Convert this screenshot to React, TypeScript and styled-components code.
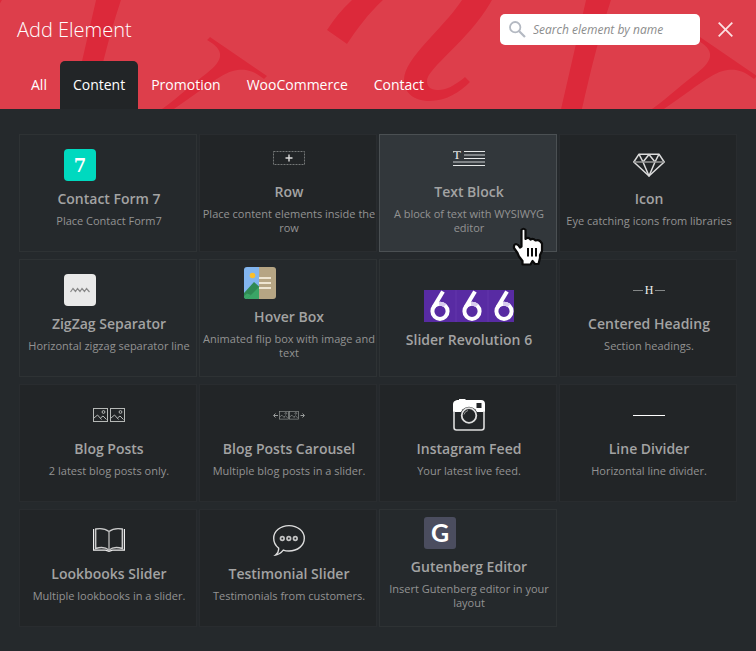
import React, { useState } from "react";
import styled, { createGlobalStyle } from "styled-components";

const GlobalStyle = createGlobalStyle`
  * { box-sizing: border-box; }
  body {
    margin: 0;
    background: #2a202d;
    font-family: "Open Sans", "Noto Sans", sans-serif;
  }
  button, input { font-family: inherit; }
`;

const Dialog = styled.main`
  min-height: 100vh;
  display: flex;
  flex-direction: column;
  background: #25292c;
  border-bottom: 1px solid #2a202d;
`;

const Header = styled.header`
  position: relative;
  isolation: isolate;
  background: #dd3e4b;
`;

const Backdrop = styled.svg`
  position: absolute;
  inset: 0;
  width: 100%;
  height: 100%;
  z-index: -1;
`;

const TopBar = styled.div`
  display: flex;
  align-items: center;
  height: 59px;
  padding: 0 5px 0 17px;
`;

const Title = styled.h1`
  flex: 1;
  margin: 0;
  font-size: 20px;
  line-height: 28px;
  font-weight: 300;
  color: #fff;
`;

const SearchBox = styled.label`
  display: flex;
  align-items: center;
  gap: 7px;
  width: 200px;
  height: 31px;
  padding: 0 9px;
  border-radius: 5px;
  background: #fff;
`;

const SearchInput = styled.input`
  flex: 1;
  min-width: 0;
  padding: 0;
  border: 0;
  outline: 0;
  background: transparent;
  font-size: 12px;
  line-height: 20px;
  font-style: italic;
  color: #555;
  &::placeholder { color: #8c8c8c; opacity: 1; }
`;

const CloseButton = styled.button`
  display: flex;
  align-items: center;
  justify-content: center;
  width: 51px;
  height: 31px;
  padding: 0;
  border: 0;
  background: transparent;
  cursor: pointer;
`;

const Tabs = styled.nav`
  display: flex;
  padding: 2px 18px 0;
`;

const Tab = styled.button<{ $active: boolean }>`
  height: 48px;
  padding: 0 13px;
  border: 0;
  border-radius: 5px 5px 0 0;
  background: ${(p) => (p.$active ? "#222527" : "transparent")};
  font-size: 14px;
  line-height: 20px;
  font-weight: 500;
  color: #fff;
  cursor: pointer;
`;

const Grid = styled.ul`
  display: grid;
  grid-template-columns: repeat(4, 1fr);
  gap: 7px 2px;
  margin: 0;
  padding: 25px 19px 24px;
  list-style: none;
`;

const Cell = styled.li`
  position: relative;
  display: flex;
  min-width: 0;
`;

type Tone = "plain" | "dark" | "hover";
const toneFill = { plain: "#25292c", dark: "#222527", hover: "#32373b" };
const toneLine = { plain: "#2e3234", dark: "#292c2f", hover: "#4b5053" };

const Card = styled.button<{ $tone: Tone }>`
  display: flex;
  flex-direction: column;
  align-items: center;
  justify-content: center;
  width: 100%;
  min-height: 118px;
  padding: 0 0 0 2px;
  border: 1px solid ${(p) => toneLine[p.$tone]};
  background: ${(p) => toneFill[p.$tone]};
  text-align: center;
  cursor: pointer;
`;

const IconSlot = styled.span<{ $wide?: boolean }>`
  display: flex;
  width: ${(p) => (p.$wide ? "90px" : "32px")};
  height: 32px;
  margin-bottom: 11px;
`;

const CardTitle = styled.span`
  font-size: 14px;
  line-height: 14px;
  font-weight: 600;
  color: #a3a3a3;
`;

const CardText = styled.span`
  margin: 8px 0 9px;
  font-size: 11px;
  line-height: 14px;
  color: #939393;
`;

const Pointer = styled.svg`
  position: absolute;
  right: 12px;
  top: 93px;
  z-index: 1;
  pointer-events: none;
`;

const Svg = ({ children, w = 32 }: { children: React.ReactNode; w?: number }) => (
  <svg width={w} height="32" viewBox={`0 0 ${w} 32`} fill="none" aria-hidden="true">
    {children}
  </svg>
);

const Contact7Icon = () => (
  <Svg>
    <rect width="32" height="32" rx="4" fill="#00d9bf" />
    <text x="16" y="23" textAnchor="middle" fontFamily="DejaVu Serif, serif" fontWeight="700" fontSize="18" fill="#fff">7</text>
  </Svg>
);

const RowIcon = () => (
  <Svg>
    <rect x="0.5" y="9.5" width="31" height="13" stroke="#757878" strokeDasharray="2 1" />
    <path d="M12.5 16H19.5M16 12.5V19.5" stroke="#ddd" strokeWidth="1.4" />
  </Svg>
);

const TextBlockIcon = () => (
  <Svg>
    <text x="0" y="17" fontFamily="Liberation Serif, serif" fontSize="13" fill="#eee">T</text>
    <path d="M11 9.5H32M11 16.5H32M0 23.5H32" stroke="#e6e8e8" />
    <path d="M0 9.5H8" stroke="#c0c3c4" />
    <path d="M11 13H32M0 20H32" stroke="#808487" strokeWidth="2" />
  </Svg>
);

const DiamondIcon = () => (
  <Svg>
    <g stroke="#dcdcdc" strokeWidth="1.5" strokeLinejoin="round">
      <path d="M6 5.2H26L31.2 13L16 27L0.8 13Z" />
      <path d="M6 5.2L10 13L16 27L22 13L26 5.2M10 13L16 5.5L22 13" />
      <path d="M1 13H31" stroke="#999" />
    </g>
  </Svg>
);

const ZigZagIcon = () => (
  <Svg>
    <rect width="32" height="32" rx="4" fill="#e9e9e9" />
    <path d="M6.5 18L9 14.5L11.5 17.5L13.5 14.5L16 17.5L18 14.5L20.5 17.5L22.5 14.5L25.5 18" stroke="#888" strokeWidth="1.2" />
  </Svg>
);

const HoverBoxIcon = () => (
  <Svg>
    <clipPath id="hoverBoxClip"><rect width="32" height="32" rx="3" /></clipPath>
    <g clipPath="url(#hoverBoxClip)">
      <rect width="15" height="32" fill="#82b5ef" />
      <rect x="15" width="17" height="32" fill="#b6a584" />
      <circle cx="8.5" cy="8.5" r="2.8" fill="#fbbf2d" />
      <path d="M0 26L10 15L15 19.5V32H0Z" fill="#308a54" />
      <path d="M3 32L15 20V32Z" fill="#3ba566" />
      <path d="M0 32V29L3 26.5L7 28L3 32Z" fill="#3ba566" />
      <path d="M15 11H27M15 16H27M15 21H27" stroke="#eee5d1" strokeWidth="2" />
    </g>
  </Svg>
);

const RevolutionIcon = () => (
  <Svg w={90}>
    <rect width="90" height="32" fill="#582ba3" />
    <path d="M32 0V32M64 0V32" stroke="#6237ab" />
    {[16, 48, 80].map((x) => (
      <g key={x} strokeWidth="4">
        <circle cx={x} cy="21.3" r="7.6" stroke="#fff" />
        <path d={`M${x - 1} 13.7A7.6 7.6 0 0 1 ${x + 5} 15.6`} stroke="#d8ccee" />
        <path d={`M${x + 3} 1.5L${x - 6.6} 17.5`} stroke="#fff" />
      </g>
    ))}
  </Svg>
);

const HeadingIcon = () => (
  <Svg>
    <path d="M0 16.5H10M22 16.5H32" stroke="#858888" />
    <text x="16" y="20" textAnchor="middle" fontFamily="Liberation Serif, serif" fontSize="12" fill="#eee">H</text>
  </Svg>
);

const Photo = () => (
  <>
    <rect x="0.5" y="0.5" width="14" height="13" />
    <circle cx="10.5" cy="4" r="1.4" />
    <path d="M1 10L4.5 7L8.5 11.5M7.5 10L10 8L13.5 11.5" />
  </>
);

const PostsIcon = () => (
  <Svg>
    <g stroke="#b5b8b6">
      <g transform="translate(0 9)"><Photo /></g>
      <g transform="translate(17 9)"><Photo /></g>
    </g>
  </Svg>
);

const CarouselIcon = () => (
  <Svg>
    <g stroke="#9a9d9c">
      <g transform="translate(6 12) scale(0.65 0.6)"><Photo /></g>
      <g transform="translate(16 12) scale(0.65 0.6)"><Photo /></g>
      <path d="M5 16.5H1M2.5 14.5L0.5 16.5L2.5 18.5M27.5 16.5H31M29.5 14.5L31.5 16.5L29.5 18.5" />
    </g>
  </Svg>
);

const CameraIcon = () => (
  <Svg>
    <path d="M4 1H6V0H12L13 1H28Q32 1 32 5V13H0V5Q0 2 4 1Z" fill="#fff" />
    <path d="M1 12V28.5Q1 31 3.5 31H28.5Q31 31 31 28.5V12" stroke="#ddd" strokeWidth="1.6" />
    <rect x="23.5" y="4" width="5" height="5" fill="#222527" />
    <circle cx="16" cy="16.5" r="8.7" fill="#222527" />
    <circle cx="16" cy="16.5" r="7.3" stroke="#ddd" strokeWidth="1.8" />
    <path d="M11 15.5A5.5 5.5 0 0 1 15 11.5" stroke="#999" />
  </Svg>
);

const DividerIcon = () => (
  <Svg>
    <path d="M0 16.5H32" stroke="#fff" />
  </Svg>
);

const BookIcon = () => (
  <Svg>
    <path d="M2.7 5V24.5Q11 22 16 26Q21 22 29.3 24.5V5Q21 3.5 16 7.5Q11 3.5 2.7 5Z" stroke="#ccc" strokeWidth="1.4" />
    <path d="M16 7.5V26" stroke="#aaa" strokeWidth="1.5" />
    <path d="M0.6 5V26.2H12.5L16 27.4L19.5 26.2H31.4V5" stroke="#eee" strokeWidth="1.2" />
  </Svg>
);

const ChatIcon = () => (
  <Svg>
    <path d="M16 1.6C24.6 1.6 31.3 7.2 31.3 14.3C31.3 21.5 24.6 27 16 27C13.8 27 11.8 26.7 10.3 26.1C8 29 5.5 30.6 2.6 31C5 29 6 26.8 5.6 24.1C2.3 21.6 0.7 18.2 0.7 14.3C0.7 7.2 7.4 1.6 16 1.6Z" stroke="#ddd" strokeWidth="1.4" />
    <g stroke="#c4c4c4" strokeWidth="1.7">
      <circle cx="9.3" cy="14.5" r="1.8" />
      <circle cx="15.8" cy="14.5" r="1.8" />
      <circle cx="22.3" cy="14.5" r="1.8" />
    </g>
  </Svg>
);

const GutenbergIcon = () => (
  <Svg>
    <rect width="32" height="32" rx="3" fill="#4b4d5f" />
    <text x="16" y="24.5" textAnchor="middle" fontFamily="Lato, sans-serif" fontWeight="700" fontSize="25" fill="#fff">G</text>
  </Svg>
);

const HandPointer = () => (
  <Pointer width="33" height="40" viewBox="0 0 33 40" fill="none" aria-hidden="true">
    <path
      d="M9.5 3Q11.5 0.5 13.5 3V12Q16 9.5 18.5 12.5Q21 10.8 23.5 13.5Q26 12.5 28 14L30 16.5V24L28 28V31L26.5 37H23L20.5 34L18.5 37.5H10.5V34L7 29.5L5.5 26L2 21Q1.5 17.5 4 17Q6.5 17.5 8 20.5L9.5 19.5Z"
      fill="#fff" stroke="#0b0b0b" strokeWidth="2.2" strokeLinejoin="round"
    />
    <path d="M16 21V29.5M20 21V29.5M24 21V29.5" stroke="#0b0b0b" strokeWidth="2" />
  </Pointer>
);

type Item = { title: string; text?: string; tone: Tone; wide?: boolean; icon: React.ReactNode };

const items: Item[] = [
  { title: "Contact Form 7", text: "Place Contact Form7", tone: "plain", wide: true, icon: <Contact7Icon /> },
  { title: "Row", text: "Place content elements inside the row", tone: "dark", icon: <RowIcon /> },
  { title: "Text Block", text: "A block of text with WYSIWYG editor", tone: "hover", icon: <TextBlockIcon /> },
  { title: "Icon", text: "Eye catching icons from libraries", tone: "dark", icon: <DiamondIcon /> },
  { title: "ZigZag Separator", text: "Horizontal zigzag separator line", tone: "plain", wide: true, icon: <ZigZagIcon /> },
  { title: "Hover Box", text: "Animated flip box with image and text", tone: "plain", wide: true, icon: <HoverBoxIcon /> },
  { title: "Slider Revolution 6", tone: "plain", wide: true, icon: <RevolutionIcon /> },
  { title: "Centered Heading", text: "Section headings.", tone: "dark", icon: <HeadingIcon /> },
  { title: "Blog Posts", text: "2 latest blog posts only.", tone: "dark", icon: <PostsIcon /> },
  { title: "Blog Posts Carousel", text: "Multiple blog posts in a slider.", tone: "dark", icon: <CarouselIcon /> },
  { title: "Instagram Feed", text: "Your latest live feed.", tone: "dark", icon: <CameraIcon /> },
  { title: "Line Divider", text: "Horizontal line divider.", tone: "dark", icon: <DividerIcon /> },
  { title: "Lookbooks Slider", text: "Multiple lookbooks in a slider.", tone: "dark", icon: <BookIcon /> },
  { title: "Testimonial Slider", text: "Testimonials from customers.", tone: "dark", icon: <ChatIcon /> },
  { title: "Gutenberg Editor", text: "Insert Gutenberg editor in your layout", tone: "plain", wide: true, icon: <GutenbergIcon /> },
];

const tabNames = ["All", "Content", "Promotion", "WooCommerce", "Contact"];

const stem = "M462 0C442 30 404 58 404 80C404 94 415 101 430 101C446 101 460 92 470 82L465 77C454 86 446 90 438 90C430 90 427 86 427 81C427 68 470 40 492 0Z";

const HeaderPattern = () => (
  <Backdrop aria-hidden="true">
    <defs>
      <pattern id="flourish" width="490" height="109" patternUnits="userSpaceOnUse">
        <g fill="#dc293a">
          <path d="M96 0H121C109 36 101 70 92 109H71Z" />
          <path d="M210 37L267 76L264 79C254 71 246 69 238 70C222 72 208 86 174 109H162C180 96 192 84 207 73C224 60 225 50 207 40Z" />
          <path d="M352 0H383C368 14 357 29 347 44L327 30C334 19 342 9 352 0Z" />
          <path d={stem} />
          <path d={stem} transform="translate(-490 0)" />
        </g>
      </pattern>
    </defs>
    <rect width="100%" height="100%" fill="url(#flourish)" />
  </Backdrop>
);

export default function App() {
  const [active, setActive] = useState("Content");
  const [query, setQuery] = useState("");
  return (
    <>
      <GlobalStyle />
      <Dialog>
        <Header>
          <HeaderPattern />
          <TopBar>
            <Title>Add Element</Title>
            <SearchBox>
              <svg width="17" height="17" viewBox="0 0 17 17" fill="none" stroke="#b4b9c2" aria-hidden="true">
                <circle cx="6.2" cy="6.2" r="5.2" strokeWidth="1.8" />
                <path d="M10 10L16 16" strokeWidth="2.2" />
              </svg>
              <SearchInput
                type="text"
                aria-label="Search element by name"
                placeholder="Search element by name"
                value={query}
                onChange={(e) => setQuery(e.target.value)}
              />
            </SearchBox>
            <CloseButton type="button" aria-label="Close">
              <svg width="15" height="15" viewBox="0 0 15 15" stroke="#fbdfe1" strokeWidth="1.8" aria-hidden="true">
                <path d="M0.7 0.7L14.3 14.3M14.3 0.7L0.7 14.3" />
              </svg>
            </CloseButton>
          </TopBar>
          <Tabs>
            {tabNames.map((name) => (
              <Tab key={name} type="button" $active={name === active} onClick={() => setActive(name)}>
                {name}
              </Tab>
            ))}
          </Tabs>
        </Header>
        <Grid>
          {items.map((item) => (
            <Cell key={item.title}>
              <Card type="button" $tone={item.tone}>
                <IconSlot $wide={item.wide}>{item.icon}</IconSlot>
                <CardTitle>{item.title}</CardTitle>
                {item.text && <CardText>{item.text}</CardText>}
              </Card>
              {item.tone === "hover" && <HandPointer />}
            </Cell>
          ))}
        </Grid>
      </Dialog>
    </>
  );
}
